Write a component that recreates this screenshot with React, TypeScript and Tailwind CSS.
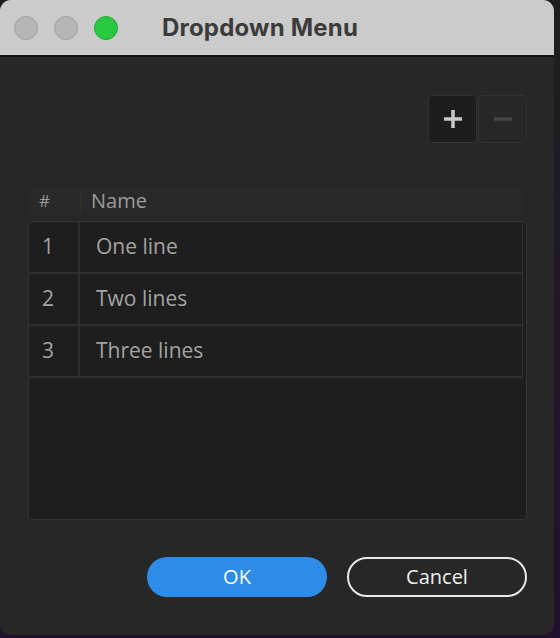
import * as React from 'react';

const rows = [
  { id: 1, name: 'One line' },
  { id: 2, name: 'Two lines' },
  { id: 3, name: 'Three lines' },
];

function TrafficLight({ color }: { color: 'gray' | 'green' }) {
  return (
    <span
      className={
        color === 'green'
          ? 'h-6 w-6 rounded-full border border-[#1faa32] bg-[#28c840]'
          : 'h-6 w-6 rounded-full border border-[#a0a0a0] bg-[#b6b6b6]'
      }
    />
  );
}

export default function App() {
  return (
    <div className="h-[638px] w-[560px] bg-gradient-to-b from-[#1e1e1e] to-[#22102e] font-['Open_Sans',sans-serif]">
      <div className="flex h-[635px] w-[554px] flex-col overflow-hidden rounded-[11px] bg-[#272727]">
        {/* Title bar */}
        <div className="flex h-[57px] items-center border-b-2 border-[#121212] bg-[#cbcbcb] pl-[14px]">
          <div className="flex gap-4">
            <TrafficLight color="gray" />
            <TrafficLight color="gray" />
            <TrafficLight color="green" />
          </div>
          <span className="ml-[44px] font-['Inter',sans-serif] text-[24px] font-bold tracking-[0.2px] text-[#3b3b3b]">
            Dropdown Menu
          </span>
        </div>

        <div className="flex flex-1 flex-col pt-[38px] pr-[27px] pl-[28px]">
          {/* Add / remove */}
          <div className="flex justify-end">
            <button className="flex h-[48px] w-[49px] items-center justify-center rounded-[4px] border border-[#333] bg-[#1d1d1d]">
              <svg width="22" height="22" viewBox="0 0 22 22">
                <path d="M11 2v18M2 11h18" stroke="#c9c9c9" strokeWidth="3.5" />
              </svg>
            </button>
            <button className="ml-px flex h-[48px] w-[49px] items-center justify-center rounded-[4px] border border-[#333] bg-[#272727]">
              <svg width="22" height="22" viewBox="0 0 22 22">
                <path d="M2 11h18" stroke="#454545" strokeWidth="3.5" />
              </svg>
            </button>
          </div>

          {/* Table header */}
          <div className="mt-[44px] mr-[4px] ml-px flex h-[27px] items-center bg-[#292929] text-[20px] text-[#9b9b9b]">
            <span className="w-[52px] border-r border-[#2f2f2f] pl-[10px] text-[17px]">#</span>
            <span className="pl-[10px]">Name</span>
          </div>

          {/* Table body */}
          <div className="mt-[7px] h-[299px] rounded-[4px] border border-[#333] bg-[#1e1e1e]">
            {rows.map((row) => (
              <div
                key={row.id}
                className="mr-[3px] flex h-[52px] items-center border-r border-b-2 border-[#2e2e2e] text-[21px] text-[#a3a3a3]"
              >
                <span className="flex h-full w-[51px] items-center border-r-2 border-[#2e2e2e] pl-[13px]">
                  {row.id}
                </span>
                <span className="pl-[16px]">{row.name}</span>
              </div>
            ))}
          </div>

          {/* Actions */}
          <div className="mt-[37px] flex justify-end gap-5">
            <button className="h-[40px] w-[180px] rounded-full bg-[#2d8ce7] text-[20px] text-white">
              OK
            </button>
            <button className="h-[40px] w-[180px] rounded-full border-2 border-[#e8e8e8] text-[20px] text-[#eeeeee]">
              Cancel
            </button>
          </div>
        </div>
      </div>
    </div>
  );
}
